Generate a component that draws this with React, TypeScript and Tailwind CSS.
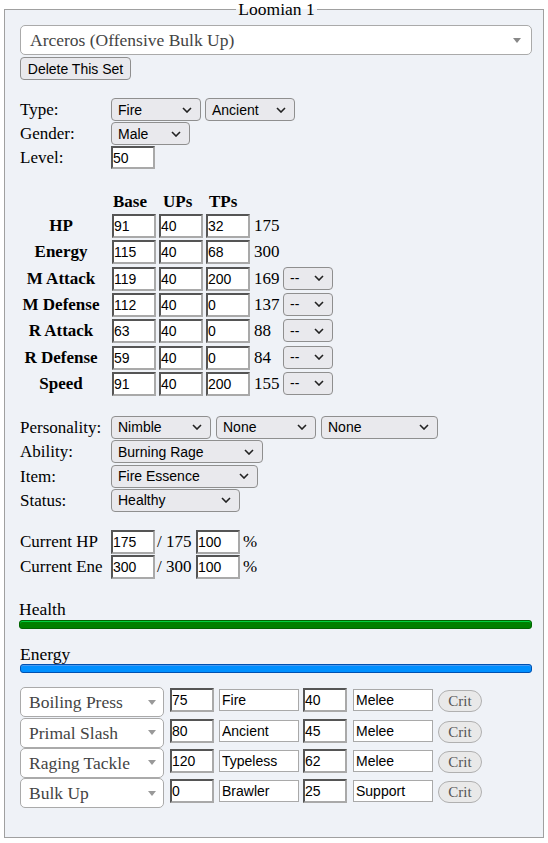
import React from "react";

const sans = "font-['Liberation_Sans',Arial,sans-serif]";

function Chevron() {
  return (
    <svg width="10" height="6" viewBox="0 0 10 6" className="shrink-0">
      <polyline points="1,1 5,5 9,1" fill="none" stroke="#222" strokeWidth="1.6" />
    </svg>
  );
}

function Caret({ color = "#888" }: { color?: string }) {
  return (
    <svg width="8" height="5" viewBox="0 0 8 5" className="shrink-0">
      <polygon points="0,0 8,0 4,5" fill={color} />
    </svg>
  );
}

function NSel({ text, cls }: { text: string; cls: string }) {
  return (
    <div
      className={`flex h-[23px] items-center justify-between rounded-[4px] border border-[#8f8f8f] bg-[#e9e9ed] pl-[6px] pr-[8px] text-[14px] leading-[16px] text-black ${sans} ${cls}`}
    >
      <span>{text}</span>
      <Chevron />
    </div>
  );
}

function Inset({ v, cls = "w-[44px] h-[24px]" }: { v: string; cls?: string }) {
  return (
    <input
      readOnly
      value={v}
      className={`block border-2 border-t-[#555555] border-l-[#555555] border-b-[#a9a9a9] border-r-[#a9a9a9] bg-white px-0 text-[14px] leading-[16px] text-black outline-none ${sans} ${cls}`}
    />
  );
}

function Flat({ v, cls }: { v: string; cls: string }) {
  return (
    <input
      readOnly
      value={v}
      className={`block border border-[#a9a9a9] bg-white pl-[2px] text-[14px] leading-[16px] text-black outline-none ${sans} ${cls}`}
    />
  );
}

const stats = [
  { n: "HP", b: "91", u: "40", t: "32", tot: "175", sel: false },
  { n: "Energy", b: "115", u: "40", t: "68", tot: "300", sel: false },
  { n: "M Attack", b: "119", u: "40", t: "200", tot: "169", sel: true },
  { n: "M Defense", b: "112", u: "40", t: "0", tot: "137", sel: true },
  { n: "R Attack", b: "63", u: "40", t: "0", tot: "88", sel: true },
  { n: "R Defense", b: "59", u: "40", t: "0", tot: "84", sel: true },
  { n: "Speed", b: "91", u: "40", t: "200", tot: "155", sel: true },
];

const moves = [
  { n: "Boiling Press", bp: "75", ty: "Fire", pp: "40", c: "Melee" },
  { n: "Primal Slash", bp: "80", ty: "Ancient", pp: "45", c: "Melee" },
  { n: "Raging Tackle", bp: "120", ty: "Typeless", pp: "62", c: "Melee" },
  { n: "Bulk Up", bp: "0", ty: "Brawler", pp: "25", c: "Support" },
];

export default function App() {
  return (
    <div className="min-h-[843px] bg-white px-[4px] font-['Liberation_Serif',serif] text-[17px] leading-[18px] text-black">
      <fieldset className="m-0 min-w-0 border border-[#a0a0a0] bg-[#eff2f7] pl-[15px] pr-[10px] pb-[28px]">
        <legend className="mx-auto px-[2px] text-[17.5px] leading-[18px]">Loomian 1</legend>

        <div className="mt-[7px] flex h-[30px] w-[512px] items-center justify-between rounded-[5px] border border-[#aaaaaa] bg-white pl-[9px] pr-[10px] text-[17.5px] text-[#444]">
          <span>Arceros (Offensive Bulk Up)</span>
          <Caret />
        </div>
        <button
          className={`mt-[2px] block h-[23px] w-[111px] rounded-[4px] border border-[#8f8f8f] bg-[#e9e9ed] text-[14px] leading-[16px] text-black ${sans}`}
        >
          Delete This Set
        </button>

        <div className="mt-[18px]">
          <div className="flex h-[24px] items-start">
            <div className="w-[91px] leading-[23px]">Type:</div>
            <NSel text="Fire" cls="w-[90px]" />
            <NSel text="Ancient" cls="ml-[4px] w-[90px]" />
          </div>
          <div className="flex h-[24px] items-start">
            <div className="w-[91px] leading-[23px]">Gender:</div>
            <NSel text="Male" cls="w-[79px]" />
          </div>
          <div className="flex h-[24px] items-start">
            <div className="w-[91px] leading-[23px]">Level:</div>
            <Inset v="50" cls="w-[44px] h-[23px]" />
          </div>
        </div>

        <div className="mt-[20px]">
          <div className="flex h-[24px] items-center font-bold">
            <div className="w-[92px]" />
            <div className="w-[47px] pl-[1px]">Base</div>
            <div className="w-[47px] pl-[4px]">UPs</div>
            <div className="w-[47px] pl-[3px]">TPs</div>
          </div>
          {stats.map((s) => (
            <div key={s.n} className="flex h-[26.33px] items-start">
              <div className="w-[82px] text-center font-bold leading-[24px]">{s.n}</div>
              <div className="ml-[10px] flex gap-[3px]">
                <Inset v={s.b} />
                <Inset v={s.u} />
                <Inset v={s.t} />
              </div>
              <div className="ml-[4px] w-[29px] leading-[24px]">{s.tot}</div>
              {s.sel && <NSel text="--" cls="w-[50px]" />}
            </div>
          ))}
        </div>

        <div className="mt-[17.7px]">
          <div className="flex h-[24.33px] items-start">
            <div className="w-[91px] leading-[23px]">Personality:</div>
            <NSel text="Nimble" cls="w-[100px]" />
            <NSel text="None" cls="ml-[5px] w-[100px]" />
            <NSel text="None" cls="ml-[5px] w-[117px]" />
          </div>
          <div className="flex h-[24.33px] items-start">
            <div className="w-[91px] leading-[23px]">Ability:</div>
            <NSel text="Burning Rage" cls="w-[152px]" />
          </div>
          <div className="flex h-[24.33px] items-start">
            <div className="w-[91px] leading-[23px]">Item:</div>
            <NSel text="Fire Essence" cls="w-[147px]" />
          </div>
          <div className="flex h-[24.33px] items-start">
            <div className="w-[91px] leading-[23px]">Status:</div>
            <NSel text="Healthy" cls="w-[129px]" />
          </div>
        </div>

        <div className="mt-[17px]">
          <div className="flex h-[24.5px] items-start">
            <div className="w-[91px] leading-[24px]">Current HP</div>
            <Inset v="175" />
            <div className="w-[41px] pl-[2px] leading-[24px]">/ 175</div>
            <Inset v="100" />
            <div className="ml-[3px] leading-[24px]">%</div>
          </div>
          <div className="flex h-[24.5px] items-start">
            <div className="w-[91px] leading-[24px]">Current Ene</div>
            <Inset v="300" />
            <div className="w-[41px] pl-[2px] leading-[24px]">/ 300</div>
            <Inset v="100" />
            <div className="ml-[3px] leading-[24px]">%</div>
          </div>
        </div>

        <div className="mt-[21px] -ml-[1px] text-[17.5px]">Health</div>
        <div className="mt-[1.5px] -ml-[1px] h-[9px] w-[513px] rounded-[3px] border border-[#006400] bg-[#008000] shadow-[inset_0_1px_0_#00d040]" />
        <div className="mt-[16.5px] text-[17.5px]">Energy</div>
        <div className="mt-[0.5px] h-[9px] w-[512px] rounded-[3px] border border-[#0050b0] bg-[#0090ff] shadow-[inset_0_1px_0_#4a9af0]" />

        <div className="mt-[14.5px]">
          {moves.map((m) => (
            <div key={m.n} className="flex h-[30.33px] items-start">
              <div className="flex h-[30px] w-[144px] items-center justify-between rounded-[5px] border border-[#aaaaaa] bg-white pl-[8px] pr-[7px] text-[17.5px] text-[#444]">
                <span>{m.n}</span>
                <Caret color="#999" />
              </div>
              <div className="ml-[6px] mt-[1px]">
                <Inset v={m.bp} cls="w-[44px] h-[24px]" />
              </div>
              <div className="ml-[5px] mt-[2px]">
                <Flat v={m.ty} cls="w-[80px] h-[22px]" />
              </div>
              <div className="ml-[4px] mt-[1px]">
                <Inset v={m.pp} cls="w-[44px] h-[24px]" />
              </div>
              <div className="ml-[6px] mt-[2px]">
                <Flat v={m.c} cls="w-[80px] h-[22px]" />
              </div>
              <button className="ml-[5px] mt-[3px] h-[22px] w-[44px] rounded-full border border-[#b0b0b0] bg-[#e9e9e9] text-[15px] leading-[16px] text-[#555]">
                Crit
              </button>
            </div>
          ))}
        </div>
      </fieldset>
    </div>
  );
}
